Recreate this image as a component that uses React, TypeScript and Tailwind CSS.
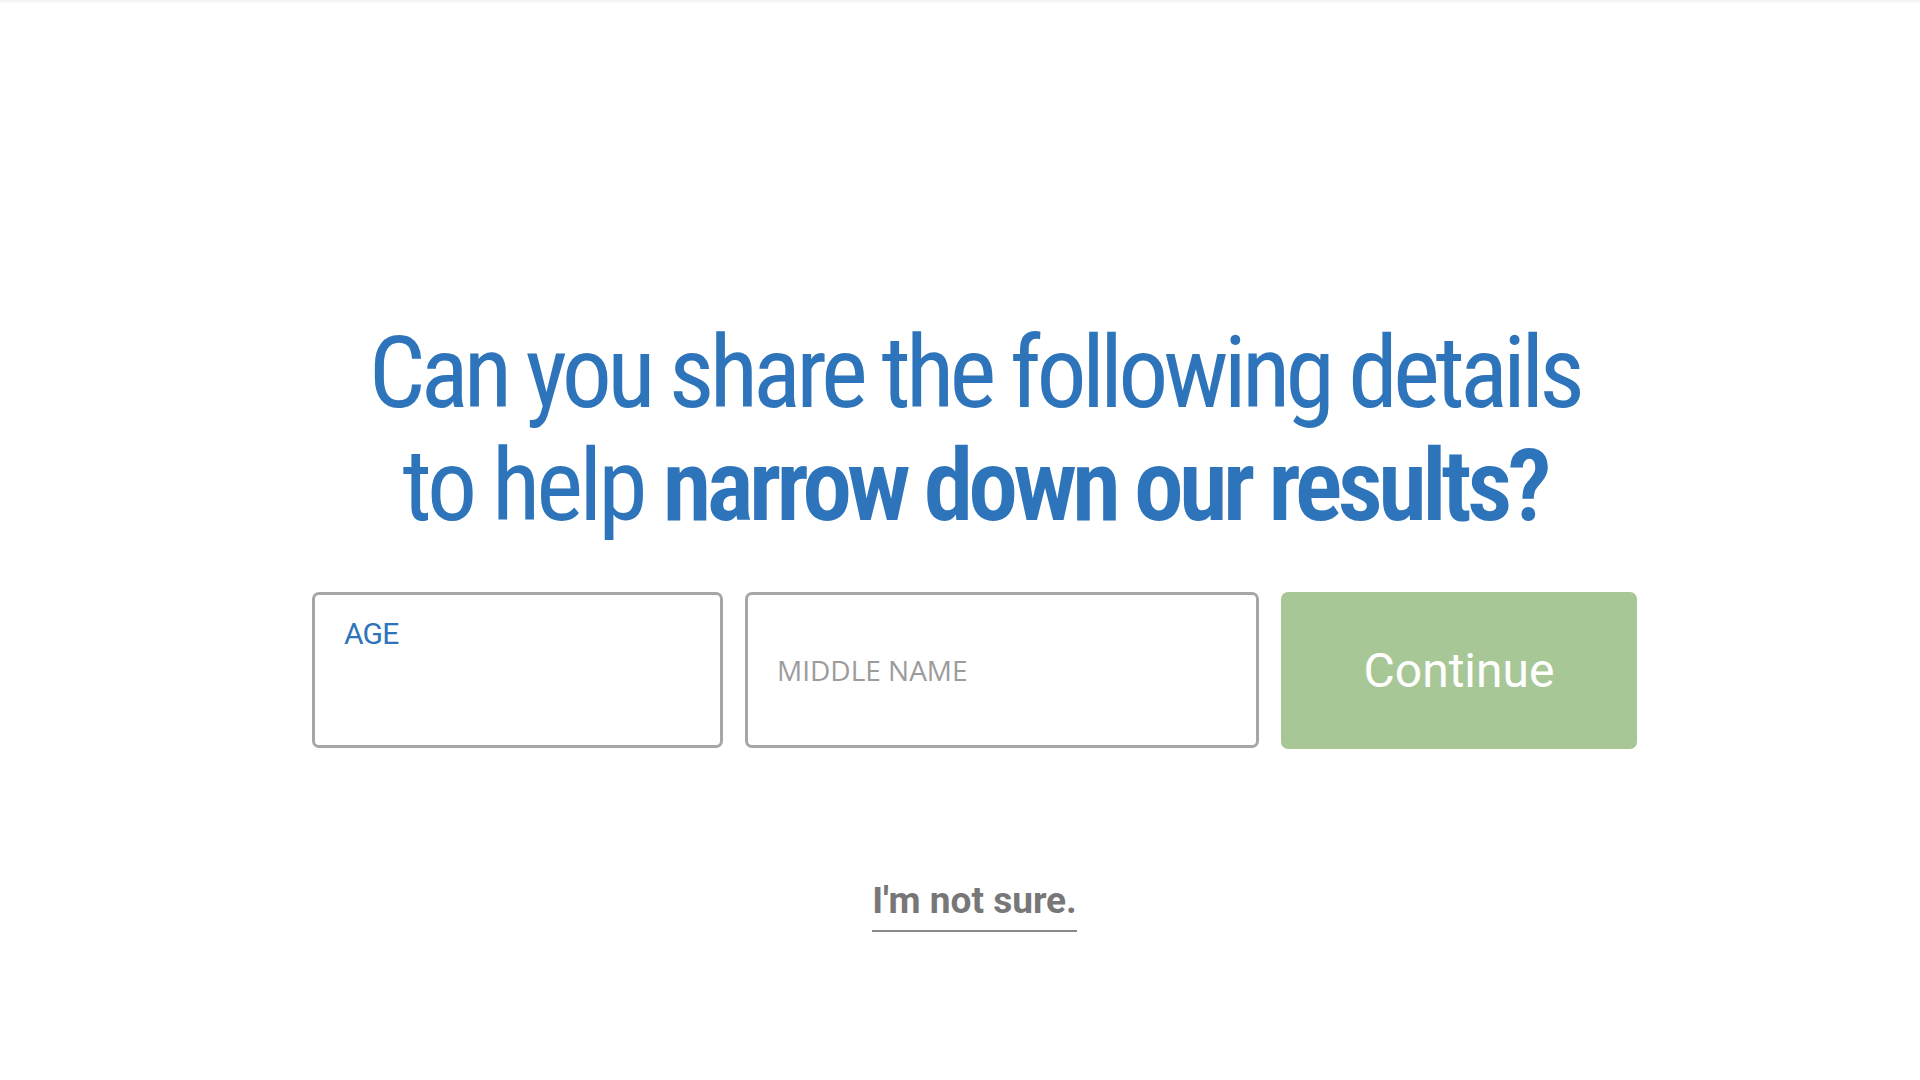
import React from "react";

export default function App() {
  return (
    <div className="min-h-[1080px] w-full bg-white" style={{ fontFamily: "Roboto, 'Helvetica Neue', Arial, sans-serif" }}>
      <div className="h-[4px] w-full bg-gradient-to-b from-[#f1f1f1] to-white" />
      <div className="ml-[312px] w-[1325px] pt-[312px] flex flex-col items-center">
        <h1
          className="whitespace-nowrap text-center text-[100px] leading-[113px] text-[#2e74ba] font-normal tracking-[-4.8px]"
          style={{ fontFamily: "'Roboto Condensed', Roboto, sans-serif" }}
        >
          Can you share the following details
          <br />
          <span className="tracking-[-4px]">to help </span>
          <span className="font-semibold tracking-[-5px]">narrow down our results?</span>
        </h1>
        <div className="mt-[50px] flex w-full gap-[22px]">
          <div className="h-[156px] w-[411px] rounded-[7px] border-[3px] border-[#a6a6a6] bg-white pt-[24px] pl-[29px]">
            <div className="text-[30px] leading-none text-[#2e74ba] tracking-[-0.8px]">AGE</div>
          </div>
          <div className="flex h-[156px] w-[514px] items-center rounded-[7px] border-[3px] border-[#a6a6a6] bg-white pl-[29px]">
            <input
              type="text"
              placeholder="MIDDLE NAME"
              className="w-full bg-transparent text-[28px] leading-none text-[#555] outline-none placeholder:text-[#9c9c9c]"
              style={{ fontFamily: "'Open Sans', Roboto, sans-serif" }}
            />
          </div>
          <button className="flex h-[157px] w-[356px] items-center justify-center rounded-[7px] bg-[#a8c797] text-[48px] text-white">
            Continue
          </button>
        </div>
        <a
          href="#"
          className="mt-[133px] border-b-2 border-[#8a8a8a] pb-[11px] text-[37px] font-bold leading-none text-[#777777]"
        >
          I'm not sure.
        </a>
      </div>
    </div>
  );
}
